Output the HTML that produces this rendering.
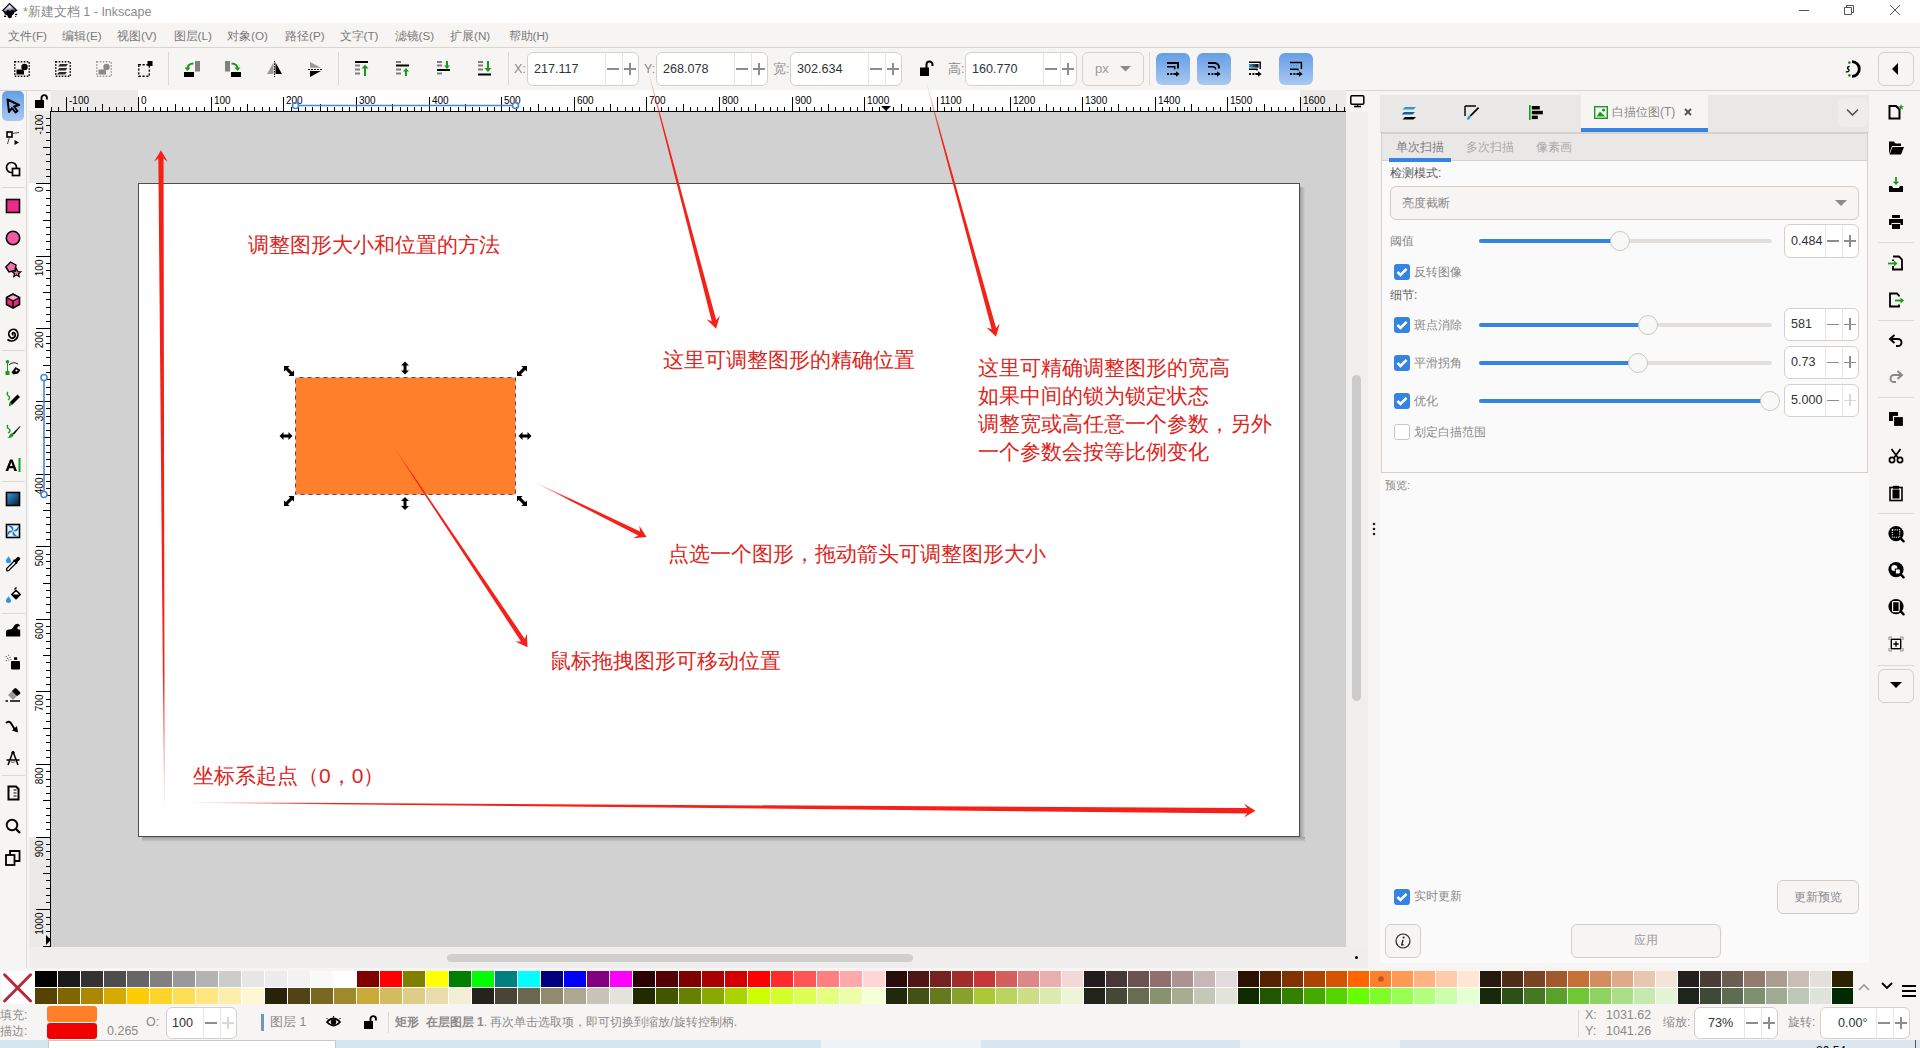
<!DOCTYPE html>
<html><head><meta charset="utf-8">
<style>
*{box-sizing:border-box}
html,body{margin:0;padding:0}
body{width:1920px;height:1048px;overflow:hidden;position:relative;background:#f6f5f4;font-family:"Liberation Sans",sans-serif;color:#2e3436}
.a{position:absolute}
.t{position:absolute;white-space:nowrap;line-height:1}
svg.s{position:absolute;overflow:visible}
.spin{position:absolute;border:1px solid #d5d0cc;border-radius:6px;background:#fff}
.spin .d{position:absolute;top:0;bottom:0;width:1px;background:#e8e5e2}
.red{color:#de2420;font-size:21px;position:absolute;white-space:nowrap;line-height:28px;font-weight:300}
.mi{position:absolute;top:29.5px;font-size:11.7px;color:#7a7a7a;white-space:nowrap;line-height:1}
</style></head><body>
<div class="a" style="left:0;top:0;width:1920px;height:23px;background:#fff"></div>
<svg class="s" style="left:0;top:0" width="22" height="22" viewBox="0 0 22 22"><defs><linearGradient id="lgk" x1="0.3" y1="0" x2="0.7" y2="1"><stop offset="0" stop-color="#fff"/><stop offset="0.45" stop-color="#c8d0dc"/><stop offset="1" stop-color="#0d2345"/></linearGradient></defs>
<path d="M9.6 2.8 L17.6 10.6 L14.2 12.6 L13.6 14.2 L12.2 15.2 L11.6 17.4 L9.6 18.6 L8 17.2 L7.4 15.6 L4.6 14.2 L4.2 12.6 L1.9 10.6 Z" fill="#000"/>
<path d="M9.6 4.4 L15.8 10.4 L13 12.2 H6.6 L3.6 10.4Z" fill="url(#lgk)"/>
<path d="M6 11.6 L8 9.6 L10 11.4 L12.2 9.4 L14.6 11.4 L13 12.3 H6.6z" fill="#000"/>
<rect x="4" y="15.6" width="2.2" height="1.4" fill="#000"/><rect x="15" y="13.8" width="2.2" height="1.3" fill="#000"/><rect x="15.2" y="16" width="1" height="1" fill="#000"/>
</svg>
<div class="t" style="left:23px;top:6px;font-size:12.5px;color:#8a8a8a">*新建文档 1 - Inkscape</div>
<div class="a" style="left:1799px;top:10px;width:10px;height:1px;background:#555"></div>
<svg class="s" style="left:1843px;top:4px" width="12" height="12" viewBox="0 0 12 12"><path d="M1.5 3.5h7v7h-7z M3.5 3.5v-2h7v7h-2" fill="none" stroke="#555" stroke-width="1"/></svg>
<svg class="s" style="left:1889px;top:4px" width="12" height="12" viewBox="0 0 12 12"><path d="M1 1L11 11M11 1L1 11" stroke="#555" stroke-width="1"/></svg>
<div class="a" style="left:0;top:47px;width:1920px;height:1px;background:#d9d5d1"></div>
<div class="mi" style="left:8px">文件(F)</div>
<div class="mi" style="left:62px">编辑(E)</div>
<div class="mi" style="left:117px">视图(V)</div>
<div class="mi" style="left:173.5px">图层(L)</div>
<div class="mi" style="left:227px">对象(O)</div>
<div class="mi" style="left:285px">路径(P)</div>
<div class="mi" style="left:339.5px">文字(T)</div>
<div class="mi" style="left:394.5px">滤镜(S)</div>
<div class="mi" style="left:450px">扩展(N)</div>
<div class="mi" style="left:508.5px">帮助(H)</div>
<div class="a" style="left:0;top:90px;width:1920px;height:1px;background:#d9d5d1"></div>
<svg class="s" style="left:14px;top:61px" width="16" height="16" viewBox="0 0 16 16"><rect x="0.75" y="0.75" width="14.5" height="14.5" fill="none" stroke="#000" stroke-width="1.5" stroke-dasharray="1.5 1.5"/><circle cx="10.5" cy="6" r="3.2" fill="#000"/><path d="M2.5 8.5h6.5l1 1.5v3.5h-7.5z" fill="#000"/></svg>
<svg class="s" style="left:55px;top:61px" width="16" height="16" viewBox="0 0 16 16"><rect x="0.75" y="0.75" width="14.5" height="14.5" fill="none" stroke="#000" stroke-width="1.5" stroke-dasharray="1.5 1.5"/><path d="M5 3h8l-2 2.5h-8z M4.5 7h8l-2 2.5h-8z M4 11h8l-2 2.5h-8z" fill="#2b2b2b"/></svg>
<svg class="s" style="left:96px;top:61px" width="16" height="16" viewBox="0 0 16 16"><rect x="0.75" y="0.75" width="14.5" height="14.5" fill="none" stroke="#999" stroke-width="1.5" stroke-dasharray="1.5 1.5"/><circle cx="10.5" cy="6" r="3.2" fill="#888"/><path d="M2.5 8.5h6.5l1 1.5v3.5h-7.5z" fill="#888"/></svg>
<svg class="s" style="left:138px;top:61px" width="16" height="16" viewBox="0 0 16 16"><rect x="0.75" y="3.75" width="10.5" height="11.5" fill="none" stroke="#000" stroke-width="1.3" stroke-dasharray="2.2 1.6"/><rect x="9.5" y="0" width="5" height="5" fill="#000"/></svg>
<div class="a" style="left:168px;top:52px;width:1px;height:33px;background:#dcd8d4"></div>
<svg class="s" style="left:184px;top:61px" width="16" height="16" viewBox="0 0 16 16"><rect x="11" y="0" width="5" height="10.5" fill="#808080"/><rect x="0" y="11" width="10" height="5" fill="#000"/><path d="M9.5 2.5 C5.5 2.5 3.5 4.5 3.5 8" fill="none" stroke="#1a9a1a" stroke-width="2"/><path d="M0.5 6.5 L3.5 10 L6.5 6.5z" fill="#1a9a1a"/></svg>
<svg class="s" style="left:225px;top:61px" width="16" height="16" viewBox="0 0 16 16"><rect x="0" y="0" width="5" height="10.5" fill="#808080"/><rect x="6" y="11" width="10" height="5" fill="#000"/><path d="M6.5 2.5 C10.5 2.5 12.5 4.5 12.5 8" fill="none" stroke="#1a9a1a" stroke-width="2"/><path d="M9.5 6.5 L12.5 10 L15.5 6.5z" fill="#1a9a1a"/></svg>
<svg class="s" style="left:267px;top:61px" width="16" height="16" viewBox="0 0 16 16"><path d="M6.5 1.5 L6.5 13 L0 13z" fill="#999"/><path d="M8.5 1.5 L15 13 L8.5 13z" fill="#000"/><path d="M7.5 0v16" stroke="#000" stroke-width="1" stroke-dasharray="1.5 1"/></svg>
<svg class="s" style="left:308px;top:61px" width="16" height="16" viewBox="0 0 16 16"><path d="M2 1 L13 6.8 L2 6.8z" fill="#999"/><path d="M2 10 L13 10 L2 16z" fill="#000"/><path d="M0 8.5h15" stroke="#000" stroke-width="1.2" stroke-dasharray="2 1"/></svg>
<div class="a" style="left:338px;top:52px;width:1px;height:33px;background:#dcd8d4"></div>
<svg class="s" style="left:355px;top:61px" width="16" height="16" viewBox="0 0 16 16"><rect x="0" y="0" width="13" height="2" fill="#000"/><path d="M0 4.5h5 M0 8.5h5 M0 12.5h5" stroke="#808080" stroke-width="1.8"/><path d="M10 15v-9" stroke="#1a9a1a" stroke-width="2"/><path d="M6.5 7.5L10 3.5L13.5 7.5z" fill="#1a9a1a"/></svg>
<svg class="s" style="left:396px;top:61px" width="16" height="16" viewBox="0 0 16 16"><path d="M0 1h5 M0 8.5h5 M0 12.5h5" stroke="#808080" stroke-width="1.8"/><rect x="0" y="3.5" width="13" height="2" fill="#000"/><path d="M10 15v-5.5" stroke="#1a9a1a" stroke-width="2"/><path d="M7 10.5L10 7L13 10.5z" fill="#1a9a1a"/></svg>
<svg class="s" style="left:437px;top:61px" width="16" height="16" viewBox="0 0 16 16"><path d="M0 1h5 M0 4.5h5 M0 12.5h5" stroke="#808080" stroke-width="1.8"/><rect x="0" y="8" width="13" height="2" fill="#000"/><path d="M10 0v5" stroke="#1a9a1a" stroke-width="2"/><path d="M7 4.5L10 8L13 4.5z" fill="#1a9a1a"/></svg>
<svg class="s" style="left:478px;top:61px" width="16" height="16" viewBox="0 0 16 16"><path d="M0 1h5 M0 4.5h5 M0 8.5h5" stroke="#808080" stroke-width="1.8"/><rect x="0" y="12.5" width="13" height="2" fill="#000"/><path d="M10 0v8" stroke="#1a9a1a" stroke-width="2"/><path d="M6.5 7L10 11L13.5 7z" fill="#1a9a1a"/></svg>
<div class="a" style="left:508px;top:52px;width:1px;height:33px;background:#dcd8d4"></div>
<div class="t" style="left:514px;top:63px;font-size:12.5px;color:#8b8b8b">X:</div>
<div class="spin" style="left:527px;top:52px;width:112px;height:34px;background:#fff">
<div class="d" style="left:77px"></div><div class="d" style="left:94px"></div>
</div>
<div class="t" style="left:534px;top:62.6px;font-size:12.6px;color:#2e3436">217.117</div>
<div class="a" style="left:606.5px;top:68.0px;width:12px;height:1.6px;background:#8b8e8f"></div>
<div class="a" style="left:624.0px;top:68.0px;width:12px;height:1.6px;background:#8b8e8f"></div>
<div class="a" style="left:629.2px;top:62.8px;width:1.6px;height:12px;background:#8b8e8f"></div>
<div class="t" style="left:644px;top:63px;font-size:12.5px;color:#8b8b8b">Y:</div>
<div class="spin" style="left:656px;top:52px;width:112px;height:34px;background:#fff">
<div class="d" style="left:77px"></div><div class="d" style="left:94px"></div>
</div>
<div class="t" style="left:663px;top:62.6px;font-size:12.6px;color:#2e3436">268.078</div>
<div class="a" style="left:735.5px;top:68.0px;width:12px;height:1.6px;background:#8b8e8f"></div>
<div class="a" style="left:753.0px;top:68.0px;width:12px;height:1.6px;background:#8b8e8f"></div>
<div class="a" style="left:758.2px;top:62.8px;width:1.6px;height:12px;background:#8b8e8f"></div>
<div class="t" style="left:773px;top:63px;font-size:12.5px;color:#8b8b8b">宽:</div>
<div class="spin" style="left:790px;top:52px;width:112px;height:34px;background:#fff">
<div class="d" style="left:77px"></div><div class="d" style="left:94px"></div>
</div>
<div class="t" style="left:797px;top:62.6px;font-size:12.6px;color:#2e3436">302.634</div>
<div class="a" style="left:869.5px;top:68.0px;width:12px;height:1.6px;background:#8b8e8f"></div>
<div class="a" style="left:887.0px;top:68.0px;width:12px;height:1.6px;background:#8b8e8f"></div>
<div class="a" style="left:892.2px;top:62.8px;width:1.6px;height:12px;background:#8b8e8f"></div>
<svg class="s" style="left:920px;top:61px" width="14" height="16" viewBox="0 0 14 16"><rect x="0" y="6.5" width="9" height="8.5" fill="#000"/><path d="M6.5 7V3.5a3 3 0 0 1 6 0V5" fill="none" stroke="#000" stroke-width="2"/></svg>
<div class="t" style="left:948px;top:63px;font-size:12.5px;color:#8b8b8b">高:</div>
<div class="spin" style="left:965px;top:52px;width:112px;height:34px;background:#fff">
<div class="d" style="left:77px"></div><div class="d" style="left:94px"></div>
</div>
<div class="t" style="left:972px;top:62.6px;font-size:12.6px;color:#2e3436">160.770</div>
<div class="a" style="left:1044.5px;top:68.0px;width:12px;height:1.6px;background:#8b8e8f"></div>
<div class="a" style="left:1062.0px;top:68.0px;width:12px;height:1.6px;background:#8b8e8f"></div>
<div class="a" style="left:1067.2px;top:62.8px;width:1.6px;height:12px;background:#8b8e8f"></div>
<div class="a" style="left:1082px;top:52px;width:62px;height:34px;border:1px solid #d5d0cc;border-radius:6px;background:#f6f5f4"></div>
<div class="t" style="left:1095px;top:62px;font-size:13px;color:#9a9a9a">px</div>
<svg class="s" style="left:1120px;top:66px" width="11" height="6" viewBox="0 0 11 6"><path d="M0 0h11l-5.5 5.5z" fill="#8b8b8b"/></svg>
<div class="a" style="left:1149px;top:52px;width:1px;height:33px;background:#dcd8d4"></div>
<div class="a" style="left:1156px;top:53px;width:34px;height:32px;border-radius:6px;background:linear-gradient(#659ee6,#a9c8f0)"></div>
<div class="a" style="left:1197px;top:53px;width:34px;height:32px;border-radius:6px;background:linear-gradient(#659ee6,#a9c8f0)"></div>
<div class="a" style="left:1279px;top:53px;width:34px;height:32px;border-radius:6px;background:linear-gradient(#659ee6,#a9c8f0)"></div>
<svg class="s" style="left:1165px;top:61px" width="16" height="16" viewBox="0 0 16 16"><path d="M2 2H13V7.6" fill="none" stroke="#000" stroke-width="2"/><path d="M2 5.8H9.7V8.2" fill="none" stroke="#000" stroke-width="1.5"/><path d="M2 13h2 M5.4 13h2 M8.4 13h3.4" stroke="#000" stroke-width="2"/><path d="M11 10.2 L14.6 13 L11 15.8z" fill="#000"/></svg>
<svg class="s" style="left:1206px;top:61px" width="16" height="16" viewBox="0 0 16 16"><path d="M2 2H8.5A4.5 4.5 0 0 1 13 6.5V7.6" fill="none" stroke="#000" stroke-width="2"/><path d="M2 5.8H7A2.7 2.7 0 0 1 9.7 8.5" fill="none" stroke="#000" stroke-width="1.5"/><path d="M2 13h2 M5.4 13h2 M8.4 13h3.4" stroke="#000" stroke-width="2"/><path d="M11 10.2 L14.6 13 L11 15.8z" fill="#000"/></svg>
<svg width="0" height="0" style="position:absolute"><defs><linearGradient id="bg3" x1="0" x2="1"><stop offset="0" stop-color="#2a9ad8"/><stop offset="1" stop-color="#000"/></linearGradient></defs></svg>
<svg class="s" style="left:1247px;top:61px" width="16" height="16" viewBox="0 0 16 16"><path d="M2 1.2H13.2V8" fill="none" stroke="#000" stroke-width="1.4"/><rect x="2" y="3" width="9.5" height="3.6" fill="url(#bg3)"/><path d="M2 8.3H10V9.5" fill="none" stroke="#000" stroke-width="1.4"/><path d="M2 13h2 M5.4 13h2 M8.4 13h3.4" stroke="#000" stroke-width="2"/><path d="M11 10.2 L14.6 13 L11 15.8z" fill="#000"/></svg>
<svg class="s" style="left:1288px;top:61px" width="16" height="16" viewBox="0 0 16 16"><path d="M2 1.5H13.4V8" fill="none" stroke="#000" stroke-width="1.5"/><path d="M2.3 3.4l1.6 1.6l-1.6 1.6 M5 3.4l1.6 1.6l-1.6 1.6 M7.7 3.4l1.6 1.6l-1.6 1.6" fill="none" stroke="#3a8ee0" stroke-width="1"/><path d="M2 8.3H10V9.5" fill="none" stroke="#000" stroke-width="1.4"/><path d="M2 13h2 M5.4 13h2 M8.4 13h3.4" stroke="#000" stroke-width="2"/><path d="M11 10.2 L14.6 13 L11 15.8z" fill="#000"/></svg>
<svg class="s" style="left:1845px;top:60px" width="17" height="18" viewBox="0 0 17 18"><path d="M7 1.7 A7.3 7.3 0 0 1 7 16.3" fill="none" stroke="#000" stroke-width="2.8"/><circle cx="4.4" cy="2.6" r="1.3" fill="#1e8a1e"/><circle cx="4.4" cy="15.4" r="1.3" fill="#1e8a1e"/><path d="M4.6 6.5 Q2.2 6.4 2.6 8.6 Q4.6 9.6 3.8 11.2 Q3 12.2 0.8 11.8" fill="none" stroke="#000" stroke-width="1.3"/></svg>
<div class="a" style="left:1878px;top:52px;width:36px;height:34px;border:1px solid #d5d0cc;border-radius:6px;background:#f6f5f4"></div>
<svg class="s" style="left:1892px;top:63px" width="6" height="12" viewBox="0 0 6 12"><path d="M6 0v12L0 6z" fill="#000"/></svg>
<div class="a" style="left:51px;top:112px;width:1295px;height:835px;background:#d1d1d1"></div>
<div class="a" style="left:1300px;top:187px;width:5px;height:654px;background:linear-gradient(to right,#9c9c9c,#d1d1d1)"></div>
<div class="a" style="left:142px;top:837px;width:1163px;height:5px;background:linear-gradient(#9c9c9c,#d1d1d1)"></div>
<div class="a" style="left:138px;top:183px;width:1162px;height:654px;background:#fff;border:1px solid #4d4d4d"></div>
<div class="a" style="left:295px;top:377px;width:221px;height:118px;background:#ff7f2a"></div>
<svg class="s" style="left:0;top:0" width="1" height="1"><rect x="295.5" y="377.5" width="220" height="117" fill="none" stroke="#fff" stroke-width="1" opacity=".6"/><rect x="295.5" y="377.5" width="220" height="117" fill="none" stroke="#5b3f6a" stroke-width="1" stroke-dasharray="4 4" stroke-dashoffset="4"/></svg>
<svg class="s" style="left:0;top:0" width="1" height="1"><path transform="translate(405 368) rotate(90) translate(-6.5 -4)" d="M0 4 L4 0 V2.5 H9 V0 L13 4 L9 8 V5.5 H4 V8 Z" fill="#000"/><path transform="translate(405 503.5) rotate(90) translate(-6.5 -4)" d="M0 4 L4 0 V2.5 H9 V0 L13 4 L9 8 V5.5 H4 V8 Z" fill="#000"/><path transform="translate(286 436) rotate(0) translate(-6.5 -4)" d="M0 4 L4 0 V2.5 H9 V0 L13 4 L9 8 V5.5 H4 V8 Z" fill="#000"/><path transform="translate(525 436) rotate(0) translate(-6.5 -4)" d="M0 4 L4 0 V2.5 H9 V0 L13 4 L9 8 V5.5 H4 V8 Z" fill="#000"/><path transform="translate(289 371) translate(-5 -5)" d="M0 0 H5.5 L4 1.8 L8.2 6 L10 4.5 V10 H4.5 L6 8.2 L1.8 4 L0 5.5 Z" fill="#000"/><path transform="translate(522 501) translate(-5 -5)" d="M0 0 H5.5 L4 1.8 L8.2 6 L10 4.5 V10 H4.5 L6 8.2 L1.8 4 L0 5.5 Z" fill="#000"/><path transform="translate(522 371) scale(-1 1) translate(-5 -5)" d="M0 0 H5.5 L4 1.8 L8.2 6 L10 4.5 V10 H4.5 L6 8.2 L1.8 4 L0 5.5 Z" fill="#000"/><path transform="translate(289 501) scale(-1 1) translate(-5 -5)" d="M0 0 H5.5 L4 1.8 L8.2 6 L10 4.5 V10 H4.5 L6 8.2 L1.8 4 L0 5.5 Z" fill="#000"/></svg>
<div class="red" style="left:248px;top:231px">调整图形大小和位置的方法</div>
<div class="red" style="left:663px;top:345.5px">这里可调整图形的精确位置</div>
<div class="red" style="left:978px;top:354px">这里可精确调整图形的宽高<br>如果中间的锁为锁定状态<br>调整宽或高任意一个参数，另外<br>一个参数会按等比例变化</div>
<div class="red" style="left:668px;top:540px">点选一个图形，拖动箭头可调整图形大小</div>
<div class="red" style="left:550px;top:647px">鼠标拖拽图形可移动位置</div>
<div class="red" style="left:193px;top:762px">坐标系起点（0，0）</div>
<svg class="s" style="left:0;top:0;z-index:5" width="1" height="1"><linearGradient id="ag1" gradientUnits="userSpaceOnUse" x1="164.4" y1="813.5" x2="163.7" y2="673.5"><stop offset="0" stop-color="#f52018" stop-opacity="0"/><stop offset="1" stop-color="#f52018" stop-opacity="1"/></linearGradient><path d="M164.70 813.50 L163.54 158.49 L167.86 161.66 L160.90 150.20 L154.06 161.74 L158.34 158.51 L164.10 813.50Z" fill="url(#ag1)"/><linearGradient id="ag2" gradientUnits="userSpaceOnUse" x1="184.4" y1="802.5" x2="334.4" y2="803.7"><stop offset="0" stop-color="#f52018" stop-opacity="0"/><stop offset="1" stop-color="#f52018" stop-opacity="1"/></linearGradient><path d="M184.40 802.80 L1247.18 813.44 L1243.95 817.61 L1255.50 810.80 L1244.05 803.81 L1247.22 808.04 L184.40 802.20Z" fill="url(#ag2)"/><linearGradient id="ag3" gradientUnits="userSpaceOnUse" x1="648.2" y1="70.7" x2="660.9" y2="119.1"><stop offset="0" stop-color="#f52018" stop-opacity="0"/><stop offset="1" stop-color="#f52018" stop-opacity="1"/></linearGradient><path d="M647.96 70.76 L711.76 321.26 L706.50 319.33 L716.10 328.70 L719.85 315.82 L716.21 320.09 L648.44 70.64Z" fill="url(#ag3)"/><linearGradient id="ag4" gradientUnits="userSpaceOnUse" x1="926.0" y1="81.4" x2="939.2" y2="129.6"><stop offset="0" stop-color="#f52018" stop-opacity="0"/><stop offset="1" stop-color="#f52018" stop-opacity="1"/></linearGradient><path d="M925.76 81.47 L991.68 329.31 L986.40 327.44 L996.10 336.70 L999.71 323.78 L996.12 328.09 L926.24 81.33Z" fill="url(#ag4)"/><linearGradient id="ag5" gradientUnits="userSpaceOnUse" x1="392.0" y1="444.3" x2="414.2" y2="477.6"><stop offset="0" stop-color="#f52018" stop-opacity="0"/><stop offset="1" stop-color="#f52018" stop-opacity="1"/></linearGradient><path d="M391.79 444.44 L520.98 641.57 L515.38 641.47 L527.50 647.20 L526.85 633.80 L524.80 639.02 L392.21 444.16Z" fill="url(#ag5)"/><linearGradient id="ag6" gradientUnits="userSpaceOnUse" x1="534.7" y1="482.2" x2="570.6" y2="499.8"><stop offset="0" stop-color="#f52018" stop-opacity="0"/><stop offset="1" stop-color="#f52018" stop-opacity="1"/></linearGradient><path d="M534.59 482.42 L638.18 535.42 L633.24 538.23 L646.60 537.10 L639.31 525.84 L640.12 531.47 L534.81 481.98Z" fill="url(#ag6)"/></svg>
<div class="a" style="left:1346px;top:112px;width:22px;height:835px;background:#f0efed"></div>
<div class="a" style="left:1352px;top:375px;width:9px;height:326px;border-radius:5px;background:#cbcbcb"></div>
<div class="a" style="left:29px;top:947px;width:1339px;height:22px;background:#efeeec"></div>
<div class="a" style="left:447px;top:954px;width:466px;height:8px;border-radius:4px;background:#cfcfcf"></div>
<div class="a" style="left:1355px;top:956px;width:3px;height:3px;border-radius:2px;background:#000"></div>
<svg class="s" style="left:1350px;top:95px" width="15" height="13" viewBox="0 0 15 13"><rect x="0.8" y="0.8" width="13" height="8.5" rx="1" fill="none" stroke="#000" stroke-width="1.5"/><path d="M4 11.5h7" stroke="#000" stroke-width="1.6"/><path d="M7.5 9v2" stroke="#000" stroke-width="1.5"/></svg>
<svg class="s" style="left:1372px;top:522px" width="4" height="14"><circle cx="2" cy="2" r="1.3" fill="#222"/><circle cx="2" cy="7" r="1.3" fill="#222"/><circle cx="2" cy="12" r="1.3" fill="#222"/></svg>
<div class="a" style="left:51px;top:90px;width:1295px;height:22px;background:#fff"></div>
<div class="a" style="left:51px;top:90px;width:87px;height:21px;background:#ebeae8"></div>
<div class="a" style="left:1300px;top:90px;width:46px;height:21px;background:#ebeae8"></div>
<div class="a" style="left:51px;top:111px;width:1295px;height:1px;background:#000"></div>
<div class="a" style="left:29px;top:111px;width:22px;height:836px;background:#fff"></div>
<div class="a" style="left:29px;top:111px;width:21px;height:72px;background:#ebeae8"></div>
<div class="a" style="left:29px;top:837px;width:21px;height:110px;background:#ebeae8"></div>
<div class="a" style="left:50px;top:111px;width:1px;height:836px;background:#000"></div>
<svg class="s" style="left:51px;top:90px" width="1295" height="22"><path d="M0.5 17V21 M7.5 17V21 M15.5 7V21 M22.5 17V21 M29.5 17V21 M36.5 17V21 M44.5 17V21 M51.5 14V21 M58.5 17V21 M65.5 17V21 M73.5 17V21 M80.5 17V21 M87.5 7V21 M94.5 17V21 M102.5 17V21 M109.5 17V21 M116.5 17V21 M124.5 14V21 M131.5 17V21 M138.5 17V21 M145.5 17V21 M153.5 17V21 M160.5 7V21 M167.5 17V21 M174.5 17V21 M182.5 17V21 M189.5 17V21 M196.5 14V21 M203.5 17V21 M211.5 17V21 M218.5 17V21 M225.5 17V21 M232.5 7V21 M240.5 17V21 M247.5 17V21 M254.5 17V21 M261.5 17V21 M269.5 14V21 M276.5 17V21 M283.5 17V21 M291.5 17V21 M298.5 17V21 M305.5 7V21 M312.5 17V21 M320.5 17V21 M327.5 17V21 M334.5 17V21 M341.5 14V21 M349.5 17V21 M356.5 17V21 M363.5 17V21 M370.5 17V21 M378.5 7V21 M385.5 17V21 M392.5 17V21 M399.5 17V21 M407.5 17V21 M414.5 14V21 M421.5 17V21 M428.5 17V21 M436.5 17V21 M443.5 17V21 M450.5 7V21 M458.5 17V21 M465.5 17V21 M472.5 17V21 M479.5 17V21 M487.5 14V21 M494.5 17V21 M501.5 17V21 M508.5 17V21 M516.5 17V21 M523.5 7V21 M530.5 17V21 M537.5 17V21 M545.5 17V21 M552.5 17V21 M559.5 14V21 M566.5 17V21 M574.5 17V21 M581.5 17V21 M588.5 17V21 M595.5 7V21 M603.5 17V21 M610.5 17V21 M617.5 17V21 M625.5 17V21 M632.5 14V21 M639.5 17V21 M646.5 17V21 M654.5 17V21 M661.5 17V21 M668.5 7V21 M675.5 17V21 M683.5 17V21 M690.5 17V21 M697.5 17V21 M704.5 14V21 M712.5 17V21 M719.5 17V21 M726.5 17V21 M733.5 17V21 M741.5 7V21 M748.5 17V21 M755.5 17V21 M763.5 17V21 M770.5 17V21 M777.5 14V21 M784.5 17V21 M792.5 17V21 M799.5 17V21 M806.5 17V21 M813.5 7V21 M821.5 17V21 M828.5 17V21 M835.5 17V21 M842.5 17V21 M850.5 14V21 M857.5 17V21 M864.5 17V21 M871.5 17V21 M879.5 17V21 M886.5 7V21 M893.5 17V21 M900.5 17V21 M908.5 17V21 M915.5 17V21 M922.5 14V21 M930.5 17V21 M937.5 17V21 M944.5 17V21 M951.5 17V21 M959.5 7V21 M966.5 17V21 M973.5 17V21 M980.5 17V21 M988.5 17V21 M995.5 14V21 M1002.5 17V21 M1009.5 17V21 M1017.5 17V21 M1024.5 17V21 M1031.5 7V21 M1038.5 17V21 M1046.5 17V21 M1053.5 17V21 M1060.5 17V21 M1067.5 14V21 M1075.5 17V21 M1082.5 17V21 M1089.5 17V21 M1097.5 17V21 M1104.5 7V21 M1111.5 17V21 M1118.5 17V21 M1126.5 17V21 M1133.5 17V21 M1140.5 14V21 M1147.5 17V21 M1155.5 17V21 M1162.5 17V21 M1169.5 17V21 M1176.5 7V21 M1184.5 17V21 M1191.5 17V21 M1198.5 17V21 M1205.5 17V21 M1213.5 14V21 M1220.5 17V21 M1227.5 17V21 M1234.5 17V21 M1242.5 17V21 M1249.5 7V21 M1256.5 17V21 M1264.5 17V21 M1271.5 17V21 M1278.5 17V21 M1285.5 14V21 M1293.5 17V21" stroke="#000" stroke-width="1"/><g font-size="10" font-family="Liberation Sans" fill="#000"><text x="18.0" y="14.2">-100</text><text x="90.0" y="14.2">0</text><text x="163.0" y="14.2">100</text><text x="235.0" y="14.2">200</text><text x="308.0" y="14.2">300</text><text x="381.0" y="14.2">400</text><text x="453.0" y="14.2">500</text><text x="526.0" y="14.2">600</text><text x="598.0" y="14.2">700</text><text x="671.0" y="14.2">800</text><text x="744.0" y="14.2">900</text><text x="816.0" y="14.2">1000</text><text x="889.0" y="14.2">1100</text><text x="962.0" y="14.2">1200</text><text x="1034.0" y="14.2">1300</text><text x="1107.0" y="14.2">1400</text><text x="1179.0" y="14.2">1500</text><text x="1252.0" y="14.2">1600</text></g></svg>
<svg class="s" style="left:29px;top:111px" width="22" height="836"><path d="M17 7.5H21 M17 14.5H21 M17 21.5H21 M17 29.5H21 M14 36.5H21 M17 43.5H21 M17 50.5H21 M17 58.5H21 M17 65.5H21 M7 72.5H21 M17 79.5H21 M17 87.5H21 M17 94.5H21 M17 101.5H21 M14 109.5H21 M17 116.5H21 M17 123.5H21 M17 130.5H21 M17 138.5H21 M7 145.5H21 M17 152.5H21 M17 159.5H21 M17 167.5H21 M17 174.5H21 M14 181.5H21 M17 188.5H21 M17 196.5H21 M17 203.5H21 M17 210.5H21 M7 217.5H21 M17 225.5H21 M17 232.5H21 M17 239.5H21 M17 246.5H21 M14 254.5H21 M17 261.5H21 M17 268.5H21 M17 276.5H21 M17 283.5H21 M7 290.5H21 M17 297.5H21 M17 305.5H21 M17 312.5H21 M17 319.5H21 M14 326.5H21 M17 334.5H21 M17 341.5H21 M17 348.5H21 M17 355.5H21 M7 363.5H21 M17 370.5H21 M17 377.5H21 M17 384.5H21 M17 392.5H21 M14 399.5H21 M17 406.5H21 M17 413.5H21 M17 421.5H21 M17 428.5H21 M7 435.5H21 M17 443.5H21 M17 450.5H21 M17 457.5H21 M17 464.5H21 M14 472.5H21 M17 479.5H21 M17 486.5H21 M17 493.5H21 M17 501.5H21 M7 508.5H21 M17 515.5H21 M17 522.5H21 M17 530.5H21 M17 537.5H21 M14 544.5H21 M17 551.5H21 M17 559.5H21 M17 566.5H21 M17 573.5H21 M7 580.5H21 M17 588.5H21 M17 595.5H21 M17 602.5H21 M17 610.5H21 M14 617.5H21 M17 624.5H21 M17 631.5H21 M17 639.5H21 M17 646.5H21 M7 653.5H21 M17 660.5H21 M17 668.5H21 M17 675.5H21 M17 682.5H21 M14 689.5H21 M17 697.5H21 M17 704.5H21 M17 711.5H21 M17 718.5H21 M7 726.5H21 M17 733.5H21 M17 740.5H21 M17 748.5H21 M17 755.5H21 M14 762.5H21 M17 769.5H21 M17 777.5H21 M17 784.5H21 M17 791.5H21 M7 798.5H21 M17 806.5H21 M17 813.5H21 M17 820.5H21 M17 827.5H21 M14 835.5H21" stroke="#000" stroke-width="1"/><g font-size="10" font-family="Liberation Sans" fill="#000"><text transform="translate(14.2 3.5) rotate(-90)" text-anchor="end">-100</text><text transform="translate(14.2 75.5) rotate(-90)" text-anchor="end">0</text><text transform="translate(14.2 148.5) rotate(-90)" text-anchor="end">100</text><text transform="translate(14.2 220.5) rotate(-90)" text-anchor="end">200</text><text transform="translate(14.2 293.5) rotate(-90)" text-anchor="end">300</text><text transform="translate(14.2 366.5) rotate(-90)" text-anchor="end">400</text><text transform="translate(14.2 438.5) rotate(-90)" text-anchor="end">500</text><text transform="translate(14.2 511.5) rotate(-90)" text-anchor="end">600</text><text transform="translate(14.2 583.5) rotate(-90)" text-anchor="end">700</text><text transform="translate(14.2 656.5) rotate(-90)" text-anchor="end">800</text><text transform="translate(14.2 729.5) rotate(-90)" text-anchor="end">900</text><text transform="translate(14.2 801.5) rotate(-90)" text-anchor="end">1000</text></g></svg>
<svg class="s" style="left:0;top:0" width="1" height="1"><g fill="none" stroke="#4a86d4" stroke-width="1.6"><path d="M298 105.5H513"/><circle cx="295.5" cy="105.5" r="3"/><circle cx="515.5" cy="105.5" r="3"/><path d="M44 380V492"/><circle cx="44" cy="377.5" r="3"/><circle cx="44" cy="494.5" r="3"/></g><path d="M881 106h10l-5 5z" fill="#000"/><path d="M46 935v10l5-5z" fill="#000"/></svg>
<svg class="s" style="left:35px;top:94px" width="14" height="15" viewBox="0 0 14 15"><rect x="0" y="6" width="9" height="8" fill="#000"/><path d="M6.5 6.5V3.8a2.7 2.7 0 0 1 5.4 0V5.5" fill="none" stroke="#000" stroke-width="1.9"/></svg>
<div class="a" style="left:26px;top:91px;width:1px;height:877px;background:#dcd8d4"></div>
<div class="a" style="left:2px;top:91px;width:22px;height:30px;border-radius:5px;background:linear-gradient(#659ee6,#a9c8f0)"></div>
<svg width="0" height="0" style="position:absolute"><defs><linearGradient id="gr1" x1="0" y1="0" x2="1" y2="1"><stop offset="0" stop-color="#3aa0e8"/><stop offset="1" stop-color="#04182e"/></linearGradient></defs></svg>
<svg class="s" style="left:5px;top:98px" width="16" height="16" viewBox="0 0 16 16"><path d="M2.5 1.5 L14 7 L9 8.5 L12.5 13 L10.5 14.5 L7 10 L4 14 Z" fill="none" stroke="#000" stroke-width="2" stroke-linejoin="round"/></svg>
<svg class="s" style="left:5px;top:130px" width="16" height="16" viewBox="0 0 16 16"><rect x="2" y="2" width="5" height="5" fill="none" stroke="#000" stroke-width="1.6"/><path d="M7 3.5 L14 2.5 M4.5 7 L2.5 14" stroke="#333" stroke-width="0.9"/><path d="M9.5 10 L14 12.5 L9.5 15z" fill="#000"/></svg>
<svg class="s" style="left:5px;top:161px" width="16" height="16" viewBox="0 0 16 16"><circle cx="6.5" cy="6.5" r="5" fill="none" stroke="#000" stroke-width="1.7"/><rect x="7.5" y="7.5" width="7" height="7" fill="#fff" stroke="#000" stroke-width="1.7"/></svg>
<svg class="s" style="left:5px;top:198px" width="16" height="16" viewBox="0 0 16 16"><rect x="1.5" y="1.5" width="13" height="13" fill="#f0288c" stroke="#000" stroke-width="1.6"/></svg>
<svg class="s" style="left:5px;top:230px" width="16" height="16" viewBox="0 0 16 16"><circle cx="8" cy="8" r="6.7" fill="#f05aa0" stroke="#000" stroke-width="1.6"/></svg>
<svg class="s" style="left:5px;top:261px" width="16" height="16" viewBox="0 0 16 16"><path d="M5.5 1 L11 4 L10 9.5 L4 11 L0.8 6z" fill="#f06eaa" stroke="#000" stroke-width="1.4"/><path d="M11.5 7.5 L12.8 10.5 L15.8 10.8 L13.5 12.7 L14.2 15.5 L11.5 14 L8.8 15.5 L9.5 12.7 L7.2 10.8 L10.2 10.5z" fill="#f06eaa" stroke="#000" stroke-width="1.2"/></svg>
<svg class="s" style="left:5px;top:293px" width="16" height="16" viewBox="0 0 16 16"><path d="M8 1 L14.5 4.5 V11.5 L8 15 L1.5 11.5 V4.5z" fill="#e8287a" stroke="#000" stroke-width="1.6"/><path d="M1.5 4.5L8 8L14.5 4.5 M8 8V15" fill="none" stroke="#000" stroke-width="1.4"/><path d="M8 2.2L13 4.6L8 7L3 4.6z" fill="#f8b0d0"/></svg>
<svg class="s" style="left:5px;top:326px" width="16" height="16" viewBox="0 0 16 16"><path d="M8.5 9 a1.2 1.2 0 1 1 1-2 a3 3 0 0 1 -4.5 4 a4.6 4.6 0 0 1 6.5 -6.5 a6.4 6.4 0 0 1 -9 9" fill="none" stroke="#000" stroke-width="1.8"/></svg>
<svg class="s" style="left:5px;top:360px" width="16" height="16" viewBox="0 0 16 16"><circle cx="2.5" cy="1.8" r="1.8" fill="#1a9a1a"/><rect x="0.5" y="11" width="4" height="4" fill="#1a9a1a"/><path d="M2.5 3v8" stroke="#1a9a1a" stroke-width="1"/><path d="M4 5 Q8 1 13 4" fill="none" stroke="#000" stroke-width="0.9"/><path d="M8.5 14.5 L6.5 12.5 L10.5 7 L15.5 10 L13 13.5z" fill="#000"/><circle cx="11.5" cy="10.5" r="1" fill="#fff"/></svg>
<svg class="s" style="left:5px;top:391px" width="16" height="16" viewBox="0 0 16 16"><path d="M3 1 Q1 3 3.5 5 Q6 7 3 9" fill="none" stroke="#1a9a1a" stroke-width="1.4"/><path d="M4 15 L5 11 L12.5 3.5 L15 6 L7.5 13.5z" fill="#000"/><path d="M4 15 L5 11 L7.5 13.5z" fill="#1a9a1a"/></svg>
<svg class="s" style="left:5px;top:423px" width="16" height="16" viewBox="0 0 16 16"><path d="M3 2 Q1 4 4 6 Q6.5 8 3 10" fill="none" stroke="#1a9a1a" stroke-width="1.4"/><path d="M7.5 10.5 L15 3 L15.5 3.5 L9 11.5z" fill="#000"/><path d="M8 10 Q5 10 4.5 12.5 Q4 14.5 2 15 Q6 15.5 8.5 13z" fill="#1a9a1a"/></svg>
<svg class="s" style="left:5px;top:457px" width="16" height="16" viewBox="0 0 16 16"><path d="M0.5 14 L5 2.5 H7.5 L12 14 H9.3 L8.4 11.3 H4.2 L3.2 14z M5 9 H7.6 L6.3 5z" fill="#000" fill-rule="evenodd"/><rect x="13.5" y="1" width="2" height="14" fill="#1a9a1a"/></svg>
<svg class="s" style="left:5px;top:491px" width="16" height="16" viewBox="0 0 16 16"><rect x="1.5" y="1.5" width="13" height="13" fill="url(#gr1)" stroke="#000" stroke-width="1.6"/></svg>
<svg class="s" style="left:5px;top:523px" width="16" height="16" viewBox="0 0 16 16"><rect x="1.5" y="1.5" width="13" height="13" fill="#e4f2fb" stroke="#000" stroke-width="1.6"/><g transform="rotate(0 8 8)"><path d="M8 8 C6 4 4.5 3.5 2 2.2 C6 1.8 9.8 3.5 8 8z" fill="#1a78c8"/></g><g transform="rotate(90 8 8)"><path d="M8 8 C6 4 4.5 3.5 2 2.2 C6 1.8 9.8 3.5 8 8z" fill="#1a78c8"/></g><g transform="rotate(180 8 8)"><path d="M8 8 C6 4 4.5 3.5 2 2.2 C6 1.8 9.8 3.5 8 8z" fill="#1a78c8"/></g><g transform="rotate(270 8 8)"><path d="M8 8 C6 4 4.5 3.5 2 2.2 C6 1.8 9.8 3.5 8 8z" fill="#1a78c8"/></g></svg>
<svg class="s" style="left:5px;top:556px" width="16" height="16" viewBox="0 0 16 16"><path d="M3.5 0.3 C5 2.6 6 3.6 6 4.8 a2.5 2.5 0 0 1 -5 0 C1 3.6 2 2.6 3.5 0.3z" fill="#2a98e0"/><path d="M1.8 14.8 L1.6 12.6 L9.4 4.8 L11.4 6.8 L3.6 14.6z" fill="#fff" stroke="#000" stroke-width="1.3" stroke-linejoin="round"/><path d="M9.2 4.2 L12 1.4 a1.8 1.8 0 0 1 2.6 2.6 L11.8 6.8z" fill="#000"/><path d="M8.6 3.8 L12.2 7.4" stroke="#000" stroke-width="1.6"/></svg>
<svg class="s" style="left:5px;top:587px" width="16" height="16" viewBox="0 0 16 16"><path d="M3.5 9.3 C5 11.4 6 12.4 6 13.5 a2.5 2.5 0 0 1 -5 0 C1 12.4 2 11.4 3.5 9.3z" fill="#2a98e0"/><path d="M6.8 7.5 L11 3.3 L15.2 7.5 L11 11.7z" fill="#fff" stroke="#000" stroke-width="1.6" stroke-linejoin="round"/><path d="M6.8 7.5 L15.2 7.5 L11 11.7z" fill="#000"/><path d="M9.5 2.5 L11.5 0.5" stroke="#000" stroke-width="1.5"/></svg>
<svg class="s" style="left:5px;top:622px" width="16" height="16" viewBox="0 0 16 16"><path d="M1 14.5 V10.5 Q1 7.6 4 7.6 Q7.6 7.6 8.6 4.6 Q9.8 1.6 12.8 1.8 Q15 2.2 15.2 4.6 Q13.2 3.8 12.4 5.4 Q11.8 7.2 15.2 7.6 V14.5z" fill="#000"/></svg>
<svg class="s" style="left:5px;top:654px" width="16" height="16" viewBox="0 0 16 16"><rect x="6" y="7" width="9" height="8.5" rx="1" fill="#000"/><rect x="9" y="3.3" width="3.2" height="2.6" fill="#000"/><path d="M0.5 2.5h1.2 M3 1.2h1.2 M2 4.4h1.2 M4.5 3.5h1.2 M0.8 6.5h1.2 M3.2 6h1.2 M5.5 5.5h1" stroke="#666" stroke-width="1.1"/></svg>
<svg class="s" style="left:5px;top:686px" width="16" height="16" viewBox="0 0 16 16"><path d="M3 9 L9 3 L14 8 L8 14z" fill="#999"/><path d="M7 5 L9.5 2.5 a1.4 1.4 0 0 1 2 0 L15 6 a1.4 1.4 0 0 1 0 2 L12 10z" fill="#000"/><path d="M0.5 15h2.5 M5 15h10" stroke="#000" stroke-width="1.6"/></svg>
<svg class="s" style="left:5px;top:718px" width="16" height="16" viewBox="0 0 16 16"><path d="M1 5 Q4 2 6.5 6 L9.5 11" fill="none" stroke="#000" stroke-width="2"/><path d="M7 12.5 L13 14.5 L12 8z" fill="#000"/></svg>
<svg class="s" style="left:5px;top:750px" width="16" height="16" viewBox="0 0 16 16"><path d="M8 1.5 L3 15 M8 1.5 L13 15 M1.5 10h13" fill="none" stroke="#000" stroke-width="1.5"/><circle cx="8" cy="2.5" r="1.6" fill="#000"/><path d="M5.5 10 a2.5 2.5 0 0 0 5 0" fill="none" stroke="#666" stroke-width="1"/></svg>
<svg class="s" style="left:5px;top:785px" width="16" height="16" viewBox="0 0 16 16"><path d="M3.5 1.5 H11 L13.5 4 V14.5 H3.5z" fill="none" stroke="#000" stroke-width="2"/><path d="M8.5 5h3 M8.5 8h3 M8.5 11h3" stroke="#000" stroke-width="1.2"/></svg>
<svg class="s" style="left:5px;top:818px" width="16" height="16" viewBox="0 0 16 16"><circle cx="7" cy="7" r="5.3" fill="none" stroke="#000" stroke-width="1.9"/><path d="M10.8 10.8 L15 15" stroke="#000" stroke-width="2.3"/></svg>
<svg class="s" style="left:5px;top:850px" width="16" height="16" viewBox="0 0 16 16"><rect x="1" y="5" width="8.5" height="10" fill="none" stroke="#000" stroke-width="1.8"/><path d="M5 5 V1 H14.5 V11 H9.5" fill="none" stroke="#000" stroke-width="1.8"/></svg>
<div class="a" style="left:2px;top:187px;width:23px;height:1px;background:#dcd8d4"></div>
<div class="a" style="left:2px;top:350px;width:23px;height:1px;background:#dcd8d4"></div>
<div class="a" style="left:2px;top:481px;width:23px;height:1px;background:#dcd8d4"></div>
<div class="a" style="left:2px;top:613px;width:23px;height:1px;background:#dcd8d4"></div>
<div class="a" style="left:2px;top:775px;width:23px;height:1px;background:#dcd8d4"></div>
<div class="a" style="left:1380px;top:95px;width:489px;height:37px;background:#e9e8e6"></div>
<div class="a" style="left:1581px;top:95px;width:127px;height:37px;background:#f6f5f4"></div>
<div class="a" style="left:1581px;top:128px;width:127px;height:4px;background:#3584e4"></div>
<div class="a" style="left:1380px;top:132px;width:489px;height:1px;background:#d5d0cc"></div>
<div class="a" style="left:1838px;top:98px;width:30px;height:29px;border-radius:6px;background:#eeedeb"></div>
<svg class="s" style="left:1846px;top:108px" width="13" height="9" viewBox="0 0 13 9"><path d="M1 1.5 L6.5 7 L12 1.5" fill="none" stroke="#555" stroke-width="1.6"/></svg>
<svg class="s" style="left:1401px;top:106px" width="16" height="14" viewBox="0 0 16 14"><path d="M4 1h11l-2.5 2.5h-11z" fill="#2a9ad8"/><path d="M3 6h11l-2.5 2.5h-11z" fill="#1a5f90"/><path d="M4 11h11l-2.5 2.5h-11z" fill="#000"/></svg>
<svg class="s" style="left:1464px;top:105px" width="16" height="16" viewBox="0 0 16 16"><path d="M1 1H12 M1 1V11" fill="none" stroke="#000" stroke-width="1.4"/><path d="M5.5 10.5 L14 2 L15.2 3.2 L7 11.6z" fill="#000"/><path d="M5.5 10.5 Q3 11 3 15 Q6.5 14.5 7 11.6z" fill="#2a9ad8"/></svg>
<svg class="s" style="left:1529px;top:105px" width="15" height="15" viewBox="0 0 15 15"><rect x="0" y="0" width="1.6" height="15" fill="#1a9a1a"/><rect x="2.8" y="1" width="8" height="3.5" fill="#000"/><rect x="2.8" y="5.8" width="11" height="3.5" fill="#000"/><rect x="2.8" y="10.6" width="6" height="3.5" fill="#000"/></svg>
<svg class="s" style="left:1594px;top:106px" width="14" height="13" viewBox="0 0 14 13"><rect x="0.7" y="0.7" width="12.6" height="11.6" fill="none" stroke="#1a9a1a" stroke-width="1.4"/><path d="M2.5 10.5 L6 5.5 L8.5 8 L11.5 10.5z" fill="#1a9a1a"/><circle cx="9.5" cy="4" r="1.6" fill="#1a9a1a"/></svg>
<div class="t" style="left:1612px;top:106px;font-size:12px;color:#8a8a8a">白描位图(T)</div>
<svg class="s" style="left:1684px;top:108px" width="8" height="8" viewBox="0 0 8 8"><path d="M1 1L7 7M7 1L1 7" stroke="#555" stroke-width="1.9"/></svg>
<div class="a" style="left:1381px;top:133px;width:487px;height:340px;background:#fafafa;border:1px solid #d5d0cc"></div>
<div class="a" style="left:1382px;top:134px;width:485px;height:27px;background:#e9e8e6;border-bottom:1px solid #d5d0cc"></div>
<div class="t" style="left:1396px;top:141px;font-size:12px;color:#7a7a7a">单次扫描</div>
<div class="t" style="left:1466px;top:141px;font-size:12px;color:#a9a9a9">多次扫描</div>
<div class="t" style="left:1536px;top:141px;font-size:12px;color:#a9a9a9">像素画</div>
<div class="a" style="left:1389px;top:158px;width:62px;height:4px;background:#3584e4"></div>
<div class="t" style="left:1390px;top:167px;font-size:12px;color:#5e5e5e">检测模式:</div>
<div class="a" style="left:1390px;top:186px;width:469px;height:34px;border:1px solid #d2cdc8;border-radius:6px;background:#f6f5f4"></div>
<div class="t" style="left:1402px;top:197px;font-size:12px;color:#8a8a8a">亮度截断</div>
<svg class="s" style="left:1835px;top:200px" width="12" height="6" viewBox="0 0 12 6"><path d="M0 0h12l-6 6z" fill="#8b8b8b"/></svg>
<div class="t" style="left:1390px;top:235px;font-size:12px;color:#8a8a8a">阈值</div>
<div class="a" style="left:1479px;top:239px;width:293px;height:4px;border-radius:2px;background:#e1dedb"></div>
<div class="a" style="left:1479px;top:239px;width:140.5px;height:4px;border-radius:2px;background:#3584e4"></div>
<div class="a" style="left:1609.5px;top:231px;width:20px;height:20px;border-radius:10px;background:#f8f8f7;border:1px solid #cdc7c2"></div>
<div class="spin" style="left:1784px;top:224px;width:75px;height:34px;background:#fff">
<div class="d" style="left:40px"></div><div class="d" style="left:57px"></div>
</div>
<div class="t" style="left:1791px;top:234.6px;font-size:12.6px;color:#2e3436">0.484</div>
<div class="a" style="left:1826.5px;top:240.0px;width:12px;height:1.6px;background:#8b8e8f"></div>
<div class="a" style="left:1844.0px;top:240.0px;width:12px;height:1.6px;background:#8b8e8f"></div>
<div class="a" style="left:1849.2px;top:234.8px;width:1.6px;height:12px;background:#8b8e8f"></div>
<div class="a" style="left:1394px;top:264px;width:16px;height:16px;border-radius:3px;background:#3584e4"></div><svg class="s" style="left:1394px;top:264px" width="16" height="16" viewBox="0 0 16 16"><path d="M3.4 8 L6.5 11 L12.6 4.9" fill="none" stroke="#fff" stroke-width="2.6"/></svg>
<div class="t" style="left:1414px;top:266px;font-size:12px;color:#8a8a8a">反转图像</div>
<div class="t" style="left:1390px;top:289px;font-size:12px;color:#5e5e5e">细节:</div>
<div class="a" style="left:1394px;top:316.7px;width:16px;height:16px;border-radius:3px;background:#3584e4"></div><svg class="s" style="left:1394px;top:316.7px" width="16" height="16" viewBox="0 0 16 16"><path d="M3.4 8 L6.5 11 L12.6 4.9" fill="none" stroke="#fff" stroke-width="2.6"/></svg>
<div class="t" style="left:1414px;top:318.7px;font-size:12px;color:#8a8a8a">斑点消除</div>
<div class="a" style="left:1479px;top:322.7px;width:293px;height:4px;border-radius:2px;background:#e1dedb"></div>
<div class="a" style="left:1479px;top:322.7px;width:169.4000000000001px;height:4px;border-radius:2px;background:#3584e4"></div>
<div class="a" style="left:1638.4px;top:314.7px;width:20px;height:20px;border-radius:10px;background:#f8f8f7;border:1px solid #cdc7c2"></div>
<div class="spin" style="left:1784px;top:308px;width:75px;height:33px;background:#fff">
<div class="d" style="left:40px"></div><div class="d" style="left:57px"></div>
</div>
<div class="t" style="left:1791px;top:318.1px;font-size:12.6px;color:#2e3436">581</div>
<div class="a" style="left:1826.5px;top:323.5px;width:12px;height:1.6px;background:#8b8e8f"></div>
<div class="a" style="left:1844.0px;top:323.5px;width:12px;height:1.6px;background:#8b8e8f"></div>
<div class="a" style="left:1849.2px;top:318.3px;width:1.6px;height:12px;background:#8b8e8f"></div>
<div class="a" style="left:1394px;top:355px;width:16px;height:16px;border-radius:3px;background:#3584e4"></div><svg class="s" style="left:1394px;top:355px" width="16" height="16" viewBox="0 0 16 16"><path d="M3.4 8 L6.5 11 L12.6 4.9" fill="none" stroke="#fff" stroke-width="2.6"/></svg>
<div class="t" style="left:1414px;top:357px;font-size:12px;color:#8a8a8a">平滑拐角</div>
<div class="a" style="left:1479px;top:361px;width:293px;height:4px;border-radius:2px;background:#e1dedb"></div>
<div class="a" style="left:1479px;top:361px;width:158.70000000000005px;height:4px;border-radius:2px;background:#3584e4"></div>
<div class="a" style="left:1627.7px;top:353px;width:20px;height:20px;border-radius:10px;background:#f8f8f7;border:1px solid #cdc7c2"></div>
<div class="spin" style="left:1784px;top:346px;width:75px;height:33px;background:#fff">
<div class="d" style="left:40px"></div><div class="d" style="left:57px"></div>
</div>
<div class="t" style="left:1791px;top:356.1px;font-size:12.6px;color:#2e3436">0.73</div>
<div class="a" style="left:1826.5px;top:361.5px;width:12px;height:1.6px;background:#8b8e8f"></div>
<div class="a" style="left:1844.0px;top:361.5px;width:12px;height:1.6px;background:#8b8e8f"></div>
<div class="a" style="left:1849.2px;top:356.3px;width:1.6px;height:12px;background:#8b8e8f"></div>
<div class="a" style="left:1394px;top:392.6px;width:16px;height:16px;border-radius:3px;background:#3584e4"></div><svg class="s" style="left:1394px;top:392.6px" width="16" height="16" viewBox="0 0 16 16"><path d="M3.4 8 L6.5 11 L12.6 4.9" fill="none" stroke="#fff" stroke-width="2.6"/></svg>
<div class="t" style="left:1414px;top:394.6px;font-size:12px;color:#8a8a8a">优化</div>
<div class="a" style="left:1479px;top:398.6px;width:293px;height:4px;border-radius:2px;background:#e1dedb"></div>
<div class="a" style="left:1479px;top:398.6px;width:291.4000000000001px;height:4px;border-radius:2px;background:#3584e4"></div>
<div class="a" style="left:1760.4px;top:390.6px;width:20px;height:20px;border-radius:10px;background:#f8f8f7;border:1px solid #cdc7c2"></div>
<div class="spin" style="left:1784px;top:384px;width:75px;height:33px;background:#fff">
<div class="d" style="left:40px"></div><div class="d" style="left:57px"></div>
</div>
<div class="t" style="left:1791px;top:394.1px;font-size:12.6px;color:#2e3436">5.000</div>
<div class="a" style="left:1826.5px;top:399.5px;width:12px;height:1.6px;background:#8b8e8f"></div>
<div class="a" style="left:1844.0px;top:399.5px;width:12px;height:1.6px;background:#d9d9d9"></div>
<div class="a" style="left:1849.2px;top:394.3px;width:1.6px;height:12px;background:#d9d9d9"></div>
<div class="a" style="left:1394px;top:424px;width:16px;height:16px;border-radius:3px;background:#fff;border:1px solid #cdc7c2"></div>
<div class="t" style="left:1414px;top:426px;font-size:12px;color:#8a8a8a">划定白描范围</div>
<div class="a" style="left:1380px;top:473px;width:489px;height:490px;background:#fafafa"></div>
<div class="t" style="left:1385px;top:480px;font-size:11px;color:#8a8a8a">预览:</div>
<div class="a" style="left:1394px;top:888.5px;width:16px;height:16px;border-radius:3px;background:#3584e4"></div><svg class="s" style="left:1394px;top:888.5px" width="16" height="16" viewBox="0 0 16 16"><path d="M3.4 8 L6.5 11 L12.6 4.9" fill="none" stroke="#fff" stroke-width="2.6"/></svg>
<div class="t" style="left:1414px;top:890px;font-size:12px;color:#8a8a8a">实时更新</div>
<div class="a" style="left:1777px;top:880px;width:82px;height:34px;border:1px solid #d2cdc8;border-radius:6px;background:#f6f5f4"></div>
<div class="t" style="left:1794px;top:891px;font-size:12px;color:#8a8a8a">更新预览</div>
<div class="a" style="left:1385px;top:924px;width:36px;height:34px;border:1px solid #d2cdc8;border-radius:6px;background:#f6f5f4"></div>
<svg class="s" style="left:1395px;top:933px" width="16" height="16" viewBox="0 0 16 16"><circle cx="8" cy="8" r="7" fill="none" stroke="#222" stroke-width="1.2"/><circle cx="8.6" cy="4.4" r="1" fill="#222"/><path d="M8 6.8 L6.8 11.8 H8.6" fill="none" stroke="#222" stroke-width="1.4"/></svg>
<div class="a" style="left:1571px;top:924px;width:150px;height:34px;border:1px solid #d2cdc8;border-radius:6px;background:#f6f5f4"></div>
<div class="t" style="left:1634px;top:934px;font-size:12px;color:#9a9a9a">应用</div>
<svg class="s" style="left:1888px;top:104px" width="16" height="16" viewBox="0 0 16 16"><path d="M1.5 2 H8 L11.5 5.5 V14.5 H1.5z" fill="none" stroke="#000" stroke-width="2"/><path d="M13 0 L13.8 2.2 L16 2.2 L14.3 3.6 L15 5.8 L13 4.5 L11 5.8 L11.7 3.6 L10 2.2 L12.2 2.2z" fill="#1a9a1a"/></svg>
<svg class="s" style="left:1888px;top:140px" width="16" height="16" viewBox="0 0 16 16"><path d="M1 1.5 H6 L7.5 3.5 H13 V6 H4 L1 14z" fill="#000"/><path d="M4.5 7 H16 L13 14.5 H1.5z" fill="#000"/></svg>
<svg class="s" style="left:1888px;top:177px" width="16" height="16" viewBox="0 0 16 16"><path d="M8 0 V6" stroke="#1a9a1a" stroke-width="1.8"/><path d="M4.8 4.5 L8 8 L11.2 4.5z" fill="#1a9a1a"/><path d="M1 9 H4 L5 11 H11 L12 9 H15 V15 H1z" fill="#000"/></svg>
<svg class="s" style="left:1888px;top:214px" width="16" height="16" viewBox="0 0 16 16"><rect x="4" y="1" width="8" height="3" fill="#000"/><path d="M1 5 H15 V11 H12.5 V9 H3.5 V11 H1z" fill="#000"/><rect x="4" y="10" width="8" height="5" fill="#000"/></svg>
<svg class="s" style="left:1888px;top:255px" width="16" height="16" viewBox="0 0 16 16"><path d="M5 1.5 H11 L14 4.5 V14.5 H5 V11" fill="none" stroke="#000" stroke-width="1.8"/><path d="M5 4.5 V6" stroke="#000" stroke-width="1.8"/><path d="M0 8.5 H7" stroke="#1a9a1a" stroke-width="1.8"/><path d="M6 5.5 L9.5 8.5 L6 11.5z" fill="#1a9a1a"/></svg>
<svg class="s" style="left:1888px;top:292px" width="16" height="16" viewBox="0 0 16 16"><path d="M11 4.5 V3.5 L9 1.5 H2 V14.5 H11 V12.5" fill="none" stroke="#000" stroke-width="1.8"/><path d="M7 8.5 H13" stroke="#1a9a1a" stroke-width="1.8"/><path d="M12.5 5.5 L16 8.5 L12.5 11.5z" fill="#1a9a1a"/></svg>
<svg class="s" style="left:1888px;top:333px" width="16" height="16" viewBox="0 0 16 16"><path d="M3 6 H10 a3.5 3.5 0 0 1 0 7 H8" fill="none" stroke="#000" stroke-width="1.9"/><path d="M6.5 2 L2 6 L6.5 10" fill="none" stroke="#000" stroke-width="1.9"/></svg>
<svg class="s" style="left:1888px;top:369px" width="16" height="16" viewBox="0 0 16 16"><path d="M13 6 H6 a3.5 3.5 0 0 0 0 7 H8" fill="none" stroke="#888" stroke-width="1.9"/><path d="M9.5 2 L14 6 L9.5 10" fill="none" stroke="#888" stroke-width="1.9"/></svg>
<svg class="s" style="left:1888px;top:411px" width="16" height="16" viewBox="0 0 16 16"><rect x="1" y="1" width="9" height="9" fill="#000"/><rect x="5.5" y="5.5" width="10" height="10" fill="#000" stroke="#f6f5f4" stroke-width="1.2"/></svg>
<svg class="s" style="left:1888px;top:448px" width="16" height="16" viewBox="0 0 16 16"><path d="M3.5 1 L10.5 10.5 M12.5 1 L5.5 10.5" stroke="#000" stroke-width="1.7"/><circle cx="4" cy="12" r="2.6" fill="none" stroke="#000" stroke-width="1.7"/><circle cx="12" cy="12" r="2.6" fill="none" stroke="#000" stroke-width="1.7"/></svg>
<svg class="s" style="left:1888px;top:485px" width="16" height="16" viewBox="0 0 16 16"><rect x="2" y="2.5" width="12" height="13" fill="none" stroke="#000" stroke-width="1.6"/><rect x="5" y="0.8" width="6" height="3" fill="#000"/><rect x="4.5" y="4.5" width="7" height="9" fill="#000"/></svg>
<svg class="s" style="left:1888px;top:526px" width="16" height="16" viewBox="0 0 16 16"><circle cx="8" cy="7.6" r="7.6" fill="#000"/><rect x="4.3" y="3.9" width="7.4" height="7.4" fill="none" stroke="#fff" stroke-width="1.1" stroke-dasharray="1.1 1.1"/><path d="M12.5 12.2 L15.6 15.3" stroke="#000" stroke-width="2.4" stroke-linecap="round"/></svg>
<svg class="s" style="left:1888px;top:562px" width="16" height="16" viewBox="0 0 16 16"><circle cx="8" cy="7.6" r="7.6" fill="#000"/><circle cx="6.3" cy="6" r="3" fill="#fff"/><rect x="7.3" y="7" width="5" height="5" fill="#fff" stroke="#000" stroke-width="1"/><path d="M12.5 12.2 L15.6 15.3" stroke="#000" stroke-width="2.4" stroke-linecap="round"/></svg>
<svg class="s" style="left:1888px;top:599px" width="16" height="16" viewBox="0 0 16 16"><circle cx="8" cy="7.6" r="7.6" fill="#000"/><rect x="4.6" y="2.6" width="6.6" height="10" rx="0.8" fill="#000" stroke="#fff" stroke-width="1.2"/><path d="M12.5 12.2 L15.6 15.3" stroke="#000" stroke-width="2.4" stroke-linecap="round"/></svg>
<svg class="s" style="left:1888px;top:636px" width="16" height="16" viewBox="0 0 16 16"><path d="M1 4V1H4 M12 1H15V4 M15 12V15H12 M4 15H1V12" fill="none" stroke="#888" stroke-width="1"/><rect x="3.3" y="3.3" width="9.4" height="9.4" fill="none" stroke="#000" stroke-width="1.4"/><path d="M8 5.3V10.7 M5.3 8H10.7" stroke="#000" stroke-width="1.4"/></svg>
<div class="a" style="left:1878px;top:242px;width:36px;height:1px;background:#dcd8d4"></div>
<div class="a" style="left:1878px;top:320px;width:36px;height:1px;background:#dcd8d4"></div>
<div class="a" style="left:1878px;top:397px;width:36px;height:1px;background:#dcd8d4"></div>
<div class="a" style="left:1878px;top:513px;width:36px;height:1px;background:#dcd8d4"></div>
<div class="a" style="left:1878px;top:665px;width:36px;height:1px;background:#dcd8d4"></div>
<div class="a" style="left:1878px;top:669px;width:36px;height:34px;border:1px solid #d5d0cc;border-radius:6px;background:#f6f5f4"></div>
<svg class="s" style="left:1890px;top:682px" width="12" height="6" viewBox="0 0 12 6"><path d="M0 0h12l-6 6z" fill="#000"/></svg>
<div class="a" style="left:0;top:968px;width:1920px;height:37px;background:#f6f5f4"></div>
<div class="a" style="left:1px;top:971px;width:1852px;height:33px;background:#fff"></div>
<svg class="s" style="left:2px;top:972px" width="31" height="31" viewBox="0 0 31 31"><path d="M2.6 2.8 L28.6 29 M28.6 2.8 L2.6 29" stroke="#b8283c" stroke-width="3" stroke-linecap="round"/></svg>
<svg class="s" style="left:0;top:0" width="1" height="1"><rect x="35.0" y="971" width="22" height="16" fill="#000000"/><rect x="35.0" y="988" width="22" height="16" fill="#554400"/><rect x="58.0" y="971" width="22" height="16" fill="#1A1A1A"/><rect x="58.0" y="988" width="22" height="16" fill="#806600"/><rect x="81.0" y="971" width="22" height="16" fill="#333333"/><rect x="81.0" y="988" width="22" height="16" fill="#AA8800"/><rect x="104.0" y="971" width="22" height="16" fill="#4D4D4D"/><rect x="104.0" y="988" width="22" height="16" fill="#D4AA00"/><rect x="127.0" y="971" width="22" height="16" fill="#666666"/><rect x="127.0" y="988" width="22" height="16" fill="#FFCC00"/><rect x="150.0" y="971" width="22" height="16" fill="#808080"/><rect x="150.0" y="988" width="22" height="16" fill="#FFD42A"/><rect x="173.0" y="971" width="22" height="16" fill="#999999"/><rect x="173.0" y="988" width="22" height="16" fill="#FFDD55"/><rect x="196.0" y="971" width="22" height="16" fill="#B3B3B3"/><rect x="196.0" y="988" width="22" height="16" fill="#FFE680"/><rect x="219.0" y="971" width="22" height="16" fill="#CCCCCC"/><rect x="219.0" y="988" width="22" height="16" fill="#FFEEAA"/><rect x="242.0" y="971" width="22" height="16" fill="#E6E6E6"/><rect x="242.0" y="988" width="22" height="16" fill="#FFF6D5"/><rect x="265.0" y="971" width="22" height="16" fill="#ECECEC"/><rect x="265.0" y="988" width="22" height="16" fill="#28220B"/><rect x="288.0" y="971" width="22" height="16" fill="#F2F2F2"/><rect x="288.0" y="988" width="22" height="16" fill="#504416"/><rect x="311.0" y="971" width="22" height="16" fill="#F9F9F9"/><rect x="311.0" y="988" width="22" height="16" fill="#786721"/><rect x="334.0" y="971" width="22" height="16" fill="#FFFFFF"/><rect x="334.0" y="988" width="22" height="16" fill="#A0892C"/><rect x="357.0" y="971" width="22" height="16" fill="#800000"/><rect x="357.0" y="988" width="22" height="16" fill="#C8AB37"/><rect x="380.0" y="971" width="22" height="16" fill="#FF0000"/><rect x="380.0" y="988" width="22" height="16" fill="#D3BC5F"/><rect x="403.0" y="971" width="22" height="16" fill="#808000"/><rect x="403.0" y="988" width="22" height="16" fill="#DECD87"/><rect x="426.0" y="971" width="22" height="16" fill="#FFFF00"/><rect x="426.0" y="988" width="22" height="16" fill="#E9DDAF"/><rect x="449.0" y="971" width="22" height="16" fill="#008000"/><rect x="449.0" y="988" width="22" height="16" fill="#F4EED7"/><rect x="472.0" y="971" width="22" height="16" fill="#00FF00"/><rect x="472.0" y="988" width="22" height="16" fill="#24221C"/><rect x="495.0" y="971" width="22" height="16" fill="#008080"/><rect x="495.0" y="988" width="22" height="16" fill="#484537"/><rect x="518.0" y="971" width="22" height="16" fill="#00FFFF"/><rect x="518.0" y="988" width="22" height="16" fill="#6C6753"/><rect x="541.0" y="971" width="22" height="16" fill="#000080"/><rect x="541.0" y="988" width="22" height="16" fill="#918A6F"/><rect x="564.0" y="971" width="22" height="16" fill="#0000FF"/><rect x="564.0" y="988" width="22" height="16" fill="#ACA793"/><rect x="587.0" y="971" width="22" height="16" fill="#800080"/><rect x="587.0" y="988" width="22" height="16" fill="#C8C4B7"/><rect x="610.0" y="971" width="22" height="16" fill="#FF00FF"/><rect x="610.0" y="988" width="22" height="16" fill="#E3E2DB"/><rect x="633.0" y="971" width="22" height="16" fill="#2B0000"/><rect x="633.0" y="988" width="22" height="16" fill="#222B00"/><rect x="656.0" y="971" width="22" height="16" fill="#550000"/><rect x="656.0" y="988" width="22" height="16" fill="#445500"/><rect x="679.0" y="971" width="22" height="16" fill="#800000"/><rect x="679.0" y="988" width="22" height="16" fill="#668000"/><rect x="702.0" y="971" width="22" height="16" fill="#AA0000"/><rect x="702.0" y="988" width="22" height="16" fill="#88AA00"/><rect x="725.0" y="971" width="22" height="16" fill="#D40000"/><rect x="725.0" y="988" width="22" height="16" fill="#AAD400"/><rect x="748.0" y="971" width="22" height="16" fill="#FF0000"/><rect x="748.0" y="988" width="22" height="16" fill="#CCFF00"/><rect x="771.0" y="971" width="22" height="16" fill="#FF2A2A"/><rect x="771.0" y="988" width="22" height="16" fill="#D4FF2A"/><rect x="794.0" y="971" width="22" height="16" fill="#FF5555"/><rect x="794.0" y="988" width="22" height="16" fill="#DDFF55"/><rect x="817.0" y="971" width="22" height="16" fill="#FF8080"/><rect x="817.0" y="988" width="22" height="16" fill="#E5FF80"/><rect x="840.0" y="971" width="22" height="16" fill="#FFAAAA"/><rect x="840.0" y="988" width="22" height="16" fill="#EEFFAA"/><rect x="863.0" y="971" width="22" height="16" fill="#FFD5D5"/><rect x="863.0" y="988" width="22" height="16" fill="#F6FFD5"/><rect x="886.0" y="971" width="21" height="16" fill="#280B0B"/><rect x="886.0" y="988" width="21" height="16" fill="#22280B"/><rect x="908.0" y="971" width="21" height="16" fill="#501616"/><rect x="908.0" y="988" width="21" height="16" fill="#445016"/><rect x="930.0" y="971" width="21" height="16" fill="#782121"/><rect x="930.0" y="988" width="21" height="16" fill="#677821"/><rect x="952.0" y="971" width="21" height="16" fill="#A02C2C"/><rect x="952.0" y="988" width="21" height="16" fill="#89A02C"/><rect x="974.0" y="971" width="21" height="16" fill="#C83737"/><rect x="974.0" y="988" width="21" height="16" fill="#ABC837"/><rect x="996.0" y="971" width="21" height="16" fill="#D35F5F"/><rect x="996.0" y="988" width="21" height="16" fill="#BCD35F"/><rect x="1018.0" y="971" width="21" height="16" fill="#DE8787"/><rect x="1018.0" y="988" width="21" height="16" fill="#CDDE87"/><rect x="1040.0" y="971" width="21" height="16" fill="#E9AFAF"/><rect x="1040.0" y="988" width="21" height="16" fill="#DDE9AF"/><rect x="1062.0" y="971" width="21" height="16" fill="#F4D7D7"/><rect x="1062.0" y="988" width="21" height="16" fill="#EEF4D7"/><rect x="1084.0" y="971" width="21" height="16" fill="#241C1C"/><rect x="1084.0" y="988" width="21" height="16" fill="#22241C"/><rect x="1106.0" y="971" width="21" height="16" fill="#483737"/><rect x="1106.0" y="988" width="21" height="16" fill="#454837"/><rect x="1128.0" y="971" width="21" height="16" fill="#6C5353"/><rect x="1128.0" y="988" width="21" height="16" fill="#676C53"/><rect x="1150.0" y="971" width="21" height="16" fill="#916F6F"/><rect x="1150.0" y="988" width="21" height="16" fill="#8A916F"/><rect x="1172.0" y="971" width="21" height="16" fill="#AC9393"/><rect x="1172.0" y="988" width="21" height="16" fill="#A7AC93"/><rect x="1194.0" y="971" width="21" height="16" fill="#C8B7B7"/><rect x="1194.0" y="988" width="21" height="16" fill="#C4C8B7"/><rect x="1216.0" y="971" width="21" height="16" fill="#E3DBDB"/><rect x="1216.0" y="988" width="21" height="16" fill="#E2E3DB"/><rect x="1238.0" y="971" width="21" height="16" fill="#2B1100"/><rect x="1238.0" y="988" width="21" height="16" fill="#112B00"/><rect x="1260.0" y="971" width="21" height="16" fill="#552200"/><rect x="1260.0" y="988" width="21" height="16" fill="#225500"/><rect x="1282.0" y="971" width="21" height="16" fill="#803300"/><rect x="1282.0" y="988" width="21" height="16" fill="#338000"/><rect x="1304.0" y="971" width="21" height="16" fill="#AA4400"/><rect x="1304.0" y="988" width="21" height="16" fill="#44AA00"/><rect x="1326.0" y="971" width="21" height="16" fill="#D45500"/><rect x="1326.0" y="988" width="21" height="16" fill="#55D400"/><rect x="1348.0" y="971" width="21" height="16" fill="#FF6600"/><rect x="1348.0" y="988" width="21" height="16" fill="#66FF00"/><rect x="1370.0" y="971" width="21" height="16" fill="#FF7F2A"/><rect x="1370.0" y="988" width="21" height="16" fill="#7FFF2A"/><rect x="1392.0" y="971" width="21" height="16" fill="#FF9955"/><rect x="1392.0" y="988" width="21" height="16" fill="#99FF55"/><rect x="1414.0" y="971" width="21" height="16" fill="#FFB380"/><rect x="1414.0" y="988" width="21" height="16" fill="#B3FF80"/><rect x="1436.0" y="971" width="21" height="16" fill="#FFCCAA"/><rect x="1436.0" y="988" width="21" height="16" fill="#CCFFAA"/><rect x="1458.0" y="971" width="21" height="16" fill="#FFE6D5"/><rect x="1458.0" y="988" width="21" height="16" fill="#E6FFD5"/><rect x="1480.0" y="971" width="21" height="16" fill="#28170B"/><rect x="1480.0" y="988" width="21" height="16" fill="#17280B"/><rect x="1502.0" y="971" width="21" height="16" fill="#502D16"/><rect x="1502.0" y="988" width="21" height="16" fill="#2D5016"/><rect x="1524.0" y="971" width="21" height="16" fill="#784421"/><rect x="1524.0" y="988" width="21" height="16" fill="#447821"/><rect x="1546.0" y="971" width="21" height="16" fill="#A05A2C"/><rect x="1546.0" y="988" width="21" height="16" fill="#5AA02C"/><rect x="1568.0" y="971" width="21" height="16" fill="#C87137"/><rect x="1568.0" y="988" width="21" height="16" fill="#71C837"/><rect x="1590.0" y="971" width="21" height="16" fill="#D38D5F"/><rect x="1590.0" y="988" width="21" height="16" fill="#8DD35F"/><rect x="1612.0" y="971" width="21" height="16" fill="#DEAA87"/><rect x="1612.0" y="988" width="21" height="16" fill="#AADE87"/><rect x="1634.0" y="971" width="21" height="16" fill="#E9C6AF"/><rect x="1634.0" y="988" width="21" height="16" fill="#C6E9AF"/><rect x="1656.0" y="971" width="21" height="16" fill="#F4E3D7"/><rect x="1656.0" y="988" width="21" height="16" fill="#E3F4D7"/><rect x="1678.0" y="971" width="21" height="16" fill="#241F1C"/><rect x="1678.0" y="988" width="21" height="16" fill="#1F241C"/><rect x="1700.0" y="971" width="21" height="16" fill="#483E37"/><rect x="1700.0" y="988" width="21" height="16" fill="#3E4837"/><rect x="1722.0" y="971" width="21" height="16" fill="#6C5D53"/><rect x="1722.0" y="988" width="21" height="16" fill="#5D6C53"/><rect x="1744.0" y="971" width="21" height="16" fill="#917C6F"/><rect x="1744.0" y="988" width="21" height="16" fill="#7C916F"/><rect x="1766.0" y="971" width="21" height="16" fill="#AC9D93"/><rect x="1766.0" y="988" width="21" height="16" fill="#9DAC93"/><rect x="1788.0" y="971" width="21" height="16" fill="#C8BEB7"/><rect x="1788.0" y="988" width="21" height="16" fill="#BEC8B7"/><rect x="1810.0" y="971" width="21" height="16" fill="#E3DFDB"/><rect x="1810.0" y="988" width="21" height="16" fill="#DFE3DB"/><rect x="1832.0" y="971" width="21" height="16" fill="#2B2200"/><rect x="1832.0" y="988" width="21" height="16" fill="#002B00"/><circle cx="1381" cy="979" r="2.8" fill="#c0561e"/></svg>
<svg class="s" style="left:1858px;top:983px" width="12" height="8" viewBox="0 0 12 8"><path d="M1 7 L6 2 L11 7" fill="none" stroke="#9a9a9a" stroke-width="1.6"/></svg>
<svg class="s" style="left:1881px;top:982px" width="12" height="8" viewBox="0 0 12 8"><path d="M1 1 L6 6 L11 1" fill="none" stroke="#000" stroke-width="1.8"/></svg>
<div class="a" style="left:1902px;top:985px;width:14px;height:1.6px;background:#000"></div>
<div class="a" style="left:1902px;top:990px;width:14px;height:1.6px;background:#000"></div>
<div class="a" style="left:1902px;top:995px;width:14px;height:1.6px;background:#000"></div>
<div class="a" style="left:0;top:1005px;width:1920px;height:35px;background:#f6f5f4"></div>
<div class="t" style="left:0;top:1009px;font-size:12px;color:#8a8a8a">填充:</div>
<div class="t" style="left:0;top:1025px;font-size:12px;color:#8a8a8a">描边:</div>
<div class="a" style="left:47px;top:1006px;width:50px;height:15.5px;border-radius:3px;background:#ff7f2a"></div>
<div class="a" style="left:47px;top:1023px;width:50px;height:15.5px;border-radius:3px;background:#f00000"></div>
<div class="t" style="left:107px;top:1025px;font-size:12.5px;color:#8a8a8a">0.265</div>
<div class="t" style="left:146px;top:1016px;font-size:12.5px;color:#8a8a8a">O:</div>
<div class="spin" style="left:166px;top:1007px;width:71px;height:32px;background:#fff">
<div class="d" style="left:36px"></div><div class="d" style="left:53px"></div>
</div>
<div class="t" style="left:172px;top:1016.6px;font-size:12.6px;color:#2e3436">100</div>
<div class="a" style="left:204.5px;top:1022.0px;width:12px;height:1.6px;background:#8b8e8f"></div>
<div class="a" style="left:222.0px;top:1022.0px;width:12px;height:1.6px;background:#d9d9d9"></div>
<div class="a" style="left:227.2px;top:1016.8px;width:1.6px;height:12px;background:#d9d9d9"></div>
<div class="a" style="left:261px;top:1014px;width:3px;height:17px;background:#7096c4"></div>
<div class="t" style="left:270px;top:1016px;font-size:12.5px;color:#8a8a8a">图层 1</div>
<svg class="s" style="left:326px;top:1016px" width="15" height="12" viewBox="0 0 15 12"><path d="M1 6 Q7.5 -1 14 6 Q7.5 13 1 6z" fill="none" stroke="#000" stroke-width="1.8"/><circle cx="7.5" cy="6" r="2.7" fill="#000"/><path d="M2 3.5 L0.5 2 M13 3.5 L14.5 2 M7.5 1.5 V0" stroke="#000" stroke-width="1"/></svg>
<svg class="s" style="left:364px;top:1015px" width="14" height="15" viewBox="0 0 14 15"><rect x="0" y="6" width="9" height="8" fill="#000"/><path d="M6.5 6.5V3.8a2.7 2.7 0 0 1 5.4 0V5.5" fill="none" stroke="#000" stroke-width="1.9"/></svg>
<div class="a" style="left:388px;top:1012px;width:1px;height:21px;background:#dcd8d4"></div>
<div class="t" style="left:395px;top:1016px;font-size:12px;color:#8a8a8a"><b>矩形</b>&nbsp;&nbsp;<b>在层图层 1</b>. 再次单击选取项，即可切换到缩放/旋转控制柄.</div>
<div class="a" style="left:1578px;top:1010px;width:1px;height:27px;background:#dcd8d4"></div>
<div class="t" style="left:1585px;top:1009px;font-size:12.5px;color:#8a8a8a">X:</div><div class="t" style="left:1606px;top:1009px;font-size:12.5px;color:#8a8a8a">1031.62</div>
<div class="t" style="left:1585px;top:1025px;font-size:12.5px;color:#8a8a8a">Y:</div><div class="t" style="left:1606px;top:1025px;font-size:12.5px;color:#8a8a8a">1041.26</div>
<div class="t" style="left:1663px;top:1016px;font-size:12px;color:#8a8a8a">缩放:</div>
<div class="spin" style="left:1694px;top:1007px;width:84px;height:32px;background:#fff">
<div class="d" style="left:49px"></div><div class="d" style="left:66px"></div>
</div>
<div class="t" style="left:1708px;top:1016.6px;font-size:12.6px;color:#2e3436">73%</div>
<div class="a" style="left:1745.5px;top:1022.0px;width:12px;height:1.6px;background:#8b8e8f"></div>
<div class="a" style="left:1763.0px;top:1022.0px;width:12px;height:1.6px;background:#8b8e8f"></div>
<div class="a" style="left:1768.2px;top:1016.8px;width:1.6px;height:12px;background:#8b8e8f"></div>
<div class="t" style="left:1788px;top:1016px;font-size:12px;color:#8a8a8a">旋转:</div>
<div class="spin" style="left:1820px;top:1007px;width:90px;height:32px;background:#fff">
<div class="d" style="left:55px"></div><div class="d" style="left:72px"></div>
</div>
<div class="t" style="left:1838px;top:1016.6px;font-size:12.6px;color:#2e3436">0.00°</div>
<div class="a" style="left:1877.5px;top:1022.0px;width:12px;height:1.6px;background:#8b8e8f"></div>
<div class="a" style="left:1895.0px;top:1022.0px;width:12px;height:1.6px;background:#8b8e8f"></div>
<div class="a" style="left:1900.2px;top:1016.8px;width:1.6px;height:12px;background:#8b8e8f"></div>
<div class="a" style="left:0px;top:1040px;width:48px;height:8px;background:#d6e6ef"></div>
<div class="a" style="left:48px;top:1040px;width:288px;height:8px;background:#ffffff"></div>
<div class="a" style="left:336px;top:1040px;width:485px;height:8px;background:#d4e6f0"></div>
<div class="a" style="left:821px;top:1040px;width:160px;height:8px;background:#edf3f7"></div>
<div class="a" style="left:981px;top:1040px;width:259px;height:8px;background:#d9e6ef"></div>
<div class="a" style="left:1240px;top:1040px;width:160px;height:8px;background:#edf2f6"></div>
<div class="a" style="left:1400px;top:1040px;width:520px;height:8px;background:#dde6ee"></div>
<div class="a" style="left:48px;top:1040px;width:288px;height:8px;border:1px solid #c8c8c8;border-bottom:0;background:#fff"></div>
<div class="a" style="left:1915px;top:1040px;width:1px;height:8px;background:#555"></div>
<div class="t" style="left:1816px;top:1045px;font-size:12px;color:#000">20:54</div>
</body></html>
